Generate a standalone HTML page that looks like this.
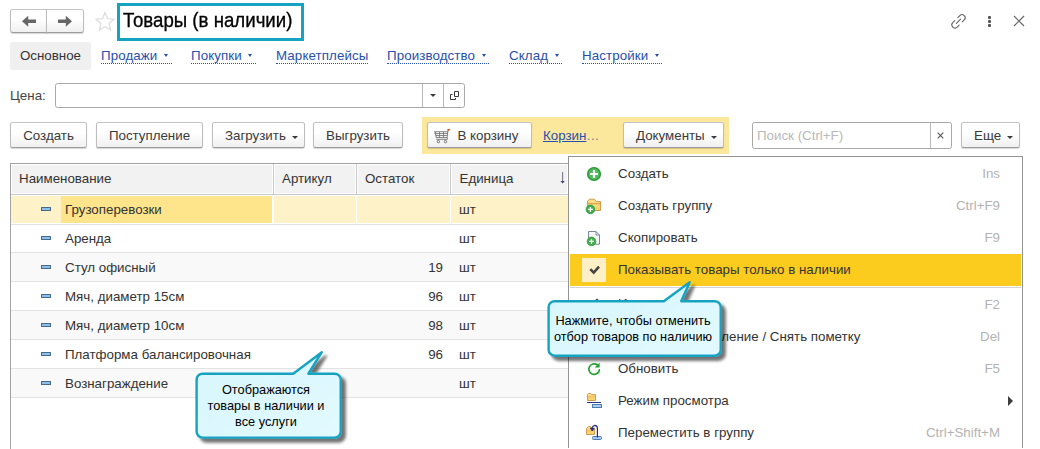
<!DOCTYPE html>
<html><head><meta charset="utf-8">
<style>
*{box-sizing:border-box;margin:0;padding:0}
html,body{width:1040px;height:449px;overflow:hidden;background:#fff}
body{font-family:"Liberation Sans",sans-serif;font-size:13.33px;color:#333;position:relative}
.abs{position:absolute}
.btn{position:absolute;height:26px;border:1px solid #bdbdbd;border-top-color:#c4c4c4;border-bottom-color:#9c9c9c;border-radius:2.5px;background:linear-gradient(#fff 40%,#f0f0f0);box-shadow:0 1px 1px rgba(0,0,0,.16);font-size:13.33px;line-height:25px;text-align:center;color:#3a3a3a;white-space:nowrap}
.car{display:inline-block;width:0;height:0;border-left:3.25px solid transparent;border-right:3.25px solid transparent;border-top:3.5px solid #3a3a3a;vertical-align:middle;margin-left:6.2px;position:relative;top:1.5px}
.tab{position:absolute;top:48px;letter-spacing:0.1px;font-size:13.33px;line-height:15px;color:#2850ae;white-space:nowrap;border-bottom:1px dotted #2850ae;padding-bottom:0px}
.tcar{display:inline-block;width:0;height:0;border-left:2.6px solid transparent;border-right:2.6px solid transparent;border-top:3.2px solid #2650b0;vertical-align:middle;margin-left:6.6px;margin-right:3.6px;position:relative;top:-1px}
.hdr{position:absolute;top:164px;height:30px;background:#f2f2f2;border:1px solid #fff;font-size:13.33px;line-height:28px;color:#333;white-space:nowrap}
.row{position:absolute;left:11px;width:557px;height:29px;font-size:13.33px;line-height:28px;color:#333}
.row.alt{}
.ln{position:absolute;left:11px;width:557px;height:1px;background:#e3e3e3}
.altbg{position:absolute;left:11px;width:557px;background:#f9f9f9}
.row span{position:absolute;top:0}
.dash{position:absolute;left:30px;top:11px;width:10px;height:4px;background:#8cc0e8;border:1px solid #46698b;border-radius:0.5px}
.mi{position:absolute;left:570px;width:451px;height:32px;font-size:13.33px;line-height:32px;color:#333;white-space:nowrap}
.mi .t{position:absolute;left:48px}
.mi .k{position:absolute;right:21px;color:#b3b3b3}
.ct{font-size:12.75px;line-height:16px;color:#000;text-align:center;white-space:nowrap}
.ct span{display:inline}
</style></head><body>

<!-- nav buttons -->
<div class="btn" style="left:10px;top:9px;width:37px;height:24px;border-radius:3px 0 0 3px"></div>
<div class="btn" style="left:46px;top:9px;width:38px;height:24px;border-radius:0 3px 3px 0"></div>
<svg class="abs" style="left:10px;top:9px" width="74" height="25" viewBox="0 0 74 25">
<path d="M12 12.3 L18.2 6.8 L18.2 10.6 L26 10.6 L26 14 L18.2 14 L18.2 17.8 Z" fill="#666"/>
<path d="M62 12.3 L55.8 6.8 L55.8 10.6 L48 10.6 L48 14 L55.8 14 L55.8 17.8 Z" fill="#666"/>
</svg>
<!-- star -->
<svg class="abs" style="left:95px;top:11px" width="20" height="20" viewBox="0 0 20 20"><path d="M10 1.5 L12.5 7.6 L19 8.2 L14 12.5 L15.6 19 L10 15.5 L4.4 19 L6 12.5 L1 8.2 L7.5 7.6 Z" fill="#fff" stroke="#dedede" stroke-width="1.3"/></svg>
<!-- title -->
<div class="abs" style="left:117px;top:3px;width:187px;height:38px;border:3px solid #14a3c2"></div>
<div class="abs" id="title" style="left:123px;top:9px;font-size:18.67px;line-height:24px;color:#000;white-space:nowrap;transform:scaleY(1.06);transform-origin:0 18.3px;-webkit-text-stroke:0.3px #000">Товары (в наличии)</div>

<!-- top right icons -->
<svg class="abs" style="left:945px;top:8px" width="28" height="28" viewBox="945 8 28 28" fill="none" stroke="#666" stroke-width="1.1" stroke-linecap="round"><g transform="translate(958.5 21.3) rotate(-45)"><path d="M-2.2 -3.1 H-5 A3.1 3.1 0 0 0 -5 3.1 H-2.2"/><path d="M2.2 -3.1 H5 A3.1 3.1 0 0 1 5 3.1 H2.2"/><path d="M-3 0 H3"/></g></svg>
<div class="abs" style="left:987.5px;top:15.5px;width:3px;height:3px;background:#555;border-radius:35%;box-shadow:0 4px 0 #555,0 8px 0 #555"></div>
<svg class="abs" style="left:1013px;top:15px" width="12" height="12" viewBox="0 0 12 12" stroke="#666" stroke-width="1.2"><path d="M1 1 L11 11 M11 1 L1 11"/></svg>

<!-- tabs -->
<div class="abs" style="left:10px;top:42px;width:81px;height:28px;background:#f0f0f0;border-radius:3px;font-size:13.33px;line-height:28px;text-align:center;color:#333">Основное</div>
<div class="tab" style="left:101px">Продажи<span class="tcar"></span></div>
<div class="tab" style="left:191px">Покупки<span class="tcar"></span></div>
<div class="tab" style="left:276px">Маркетплейсы</div>
<div class="tab" style="left:387px">Производство<span class="tcar"></span></div>
<div class="tab" style="left:509px">Склад<span class="tcar"></span></div>
<div class="tab" style="left:582px">Настройки<span class="tcar"></span></div>

<!-- Цена field -->
<div class="abs" style="left:10px;top:88px;font-size:13.33px;line-height:16px;color:#444">Цена:</div>
<div class="abs" style="left:55px;top:83px;width:410px;height:25px;border:1px solid #a8a8a8;border-radius:2.5px;background:#fff"></div>
<div class="abs" style="left:422px;top:84px;width:1px;height:23px;background:#b8b8b8"></div>
<div class="abs" style="left:443px;top:84px;width:1px;height:23px;background:#b8b8b8"></div>
<div class="abs" style="left:429.5px;top:94px;width:0;height:0;border-left:3px solid transparent;border-right:3px solid transparent;border-top:3.2px solid #3a3a3a"></div>
<svg class="abs" style="left:450px;top:91px" width="10" height="10" viewBox="0 0 10 10" fill="none" stroke="#3a3a3a" stroke-width="1"><path d="M4.5 0.5 H8.5 V5.5 H4.5 Z"/><path d="M2.6 3.5 H0.5 V8.5 H5.5 V7"/></svg>

<!-- toolbar -->
<div class="btn" style="left:10px;top:122px;width:77px">Создать</div>
<div class="btn" style="left:96px;top:122px;width:107px">Поступление</div>
<div class="btn" style="left:212px;top:122px;width:93px;text-align:left;padding-left:12px">Загрузить<span class="car"></span></div>
<div class="btn" style="left:313px;top:122px;width:90px">Выгрузить</div>
<div class="abs" style="left:422px;top:117px;width:307px;height:37px;background:#fbe89c"></div>
<div class="btn" style="left:427px;top:122px;width:105px;text-align:left;padding-left:29.5px">В корзину</div>
<div class="abs" style="left:543px;top:128px;font-size:13.33px;line-height:16px;color:#2850ae;white-space:nowrap"><span style="text-decoration:underline">Корзин</span><span style="color:#6f7f90;margin-left:0.5px;letter-spacing:0.4px">...</span></div>
<div class="btn" style="left:623px;top:122px;width:101px;text-align:left;padding-left:12px">Документы<span class="car"></span></div>
<div class="abs" style="left:752px;top:122px;width:200px;height:27px;border:1px solid #a8a8a8;border-radius:2.5px;background:#fff"></div>
<div class="abs" style="left:930px;top:123px;width:1px;height:25px;background:#b8b8b8"></div>
<div class="abs" style="left:757px;top:128px;font-size:13.33px;line-height:16px;color:#b9b9b9;white-space:nowrap">Поиск (Ctrl+F)</div>
<svg class="abs" style="left:937px;top:132px" width="7" height="7" viewBox="0 0 7 7"><path d="M0.7 0.7 L6.3 6.3 M6.3 0.7 L0.7 6.3" stroke="#555" stroke-width="1.1"/></svg>
<div class="btn" style="left:961px;top:122px;width:59px;text-align:left;padding-left:12px">Еще<span class="car"></span></div>

<!-- table -->
<div class="abs" style="left:10px;top:163px;width:560px;height:290px;border:1px solid #a3a3a3;border-right:none;border-bottom:none;background:#fff"></div>
<div class="abs" style="left:11px;top:194px;width:557px;height:1px;background:#c9c9c9"></div>
<div class="hdr" style="left:11px;width:262px;padding-left:7px">Наименование</div>
<div class="hdr" style="left:274px;width:82px;padding-left:7px">Артикул</div>
<div class="hdr" style="left:357px;width:93px;padding-left:7px">Остаток</div>
<div class="hdr" style="left:451px;width:117px;padding-left:7.5px">Единица</div>
<div class="abs" style="left:273px;top:164px;width:1px;height:30px;background:#c9c9c9"></div>
<div class="abs" style="left:356px;top:164px;width:1px;height:30px;background:#c9c9c9"></div>
<div class="abs" style="left:450px;top:164px;width:1px;height:30px;background:#c9c9c9"></div>
<svg class="abs" style="left:558px;top:170px" width="10" height="16" viewBox="0 0 10 16"><path d="M4.6 2 V12" fill="none" stroke="#6a6070" stroke-width="0.9"/><path d="M2.4 10.9 H6.8 L4.6 13.6 Z" fill="#3d4a6a"/></svg>

<div class="altbg" style="top:253px;height:28px"></div><div class="altbg" style="top:311px;height:28px"></div><div class="altbg" style="top:369px;height:28px"></div>
<div class="ln" style="top:224px"></div><div class="ln" style="top:252px"></div><div class="ln" style="top:281px"></div><div class="ln" style="top:310px"></div><div class="ln" style="top:339px"></div><div class="ln" style="top:368px"></div><div class="ln" style="top:397px"></div>
<div class="row" style="top:196px"><div class="abs" style="left:0;top:0;width:557px;height:27px;background:#fef2c8"></div><div class="abs" style="left:50px;top:0;width:211px;height:27px;background:#fee58c"></div><div class="abs" style="left:261px;top:0;width:2px;height:27px;background:#fff"></div><div class="abs" style="left:345px;top:0;width:1px;height:27px;background:#fff"></div><div class="abs" style="left:439px;top:0;width:1px;height:27px;background:#fff"></div><div class="dash"></div><span style="left:54px">Грузоперевозки</span><span style="left:448px">шт</span></div>
<div class="row" style="top:225px"><div class="dash"></div><span style="left:54px">Аренда</span><span style="left:448px">шт</span></div>
<div class="row alt" style="top:254px"><div class="dash"></div><span style="left:54px">Стул офисный</span><span style="right:125px">19</span><span style="left:448px">шт</span></div>
<div class="row" style="top:283px"><div class="dash"></div><span style="left:54px">Мяч, диаметр 15см</span><span style="right:125px">96</span><span style="left:448px">шт</span></div>
<div class="row alt" style="top:312px"><div class="dash"></div><span style="left:54px">Мяч, диаметр 10см</span><span style="right:125px">98</span><span style="left:448px">шт</span></div>
<div class="row" style="top:341px"><div class="dash"></div><span style="left:54px">Платформа балансировочная</span><span style="right:125px">96</span><span style="left:448px">шт</span></div>
<div class="row alt" style="top:370px"><div class="dash"></div><span style="left:54px">Вознаграждение</span><span style="left:448px">шт</span></div>

<!-- menu -->
<div class="abs" style="left:568px;top:156px;width:455px;height:292px;border:1px solid #949494;border-bottom:none;background:#fff"></div>
<div class="mi" style="top:158px"><span class="t">Создать</span><span class="k">Ins</span></div>
<div class="mi" style="top:190px"><span class="t">Создать группу</span><span class="k">Ctrl+F9</span></div>
<div class="mi" style="top:222px"><span class="t">Скопировать</span><span class="k">F9</span></div>
<div class="mi" style="top:254px;background:#fbcb1e"><div class="abs" style="left:12px;top:4px;width:24px;height:24px;background:#fef0c6"></div><span class="t">Показывать товары только в наличии</span></div>
<div class="abs" style="left:570px;top:287px;width:451px;height:1px;background:#d4d4d4"></div>
<div class="mi" style="top:289px"><span class="t" style="top:-1px">Изменить</span><span class="k">F2</span></div>
<div class="mi" style="top:321px"><span class="t">Пометить на удаление / Снять пометку</span><span class="k">Del</span></div>
<div class="mi" style="top:353px"><span class="t">Обновить</span><span class="k">F5</span></div>
<div class="mi" style="top:385px"><span class="t">Режим просмотра</span></div>
<div class="mi" style="top:417px"><span class="t">Переместить в группу</span><span class="k">Ctrl+Shift+M</span></div>

<!-- menu icons -->
<svg class="abs" style="left:576px;top:160px" width="40" height="290" viewBox="576 160 40 290">
<defs>
<linearGradient id="fg" x1="0" y1="0" x2="0" y2="1"><stop offset="0" stop-color="#fbe08a"/><stop offset="1" stop-color="#f9cf6a"/></linearGradient>
</defs>
<!-- create -->
<circle cx="594" cy="174" r="6.4" fill="#4fb95c" stroke="#2c9a3a" stroke-width="1.4"/>
<path d="M590 174 H598 M594 170 V178" stroke="#fff" stroke-width="2.2"/>
<!-- create group: folder -->
<path d="M587.5 210.5 V201 L589.8 199.2 H594.2 L596.3 201.5 H600.5 V210.5 Z" fill="url(#fg)" stroke="#d39a4c" stroke-width="1"/>
<path d="M587.5 203.7 H600.5" stroke="#d39a4c" stroke-width="1"/>
<circle cx="590.4" cy="209.4" r="4.3" fill="#3fae4c" stroke="#2b9a38" stroke-width="0.8"/>
<path d="M587.9 209.4 H592.9 M590.4 206.9 V211.9" stroke="#fff" stroke-width="1.3"/>
<!-- copy: doc -->
<path d="M588.5 231.5 H596 L599.5 235 V244.2 H588.5 Z" fill="#f7f7f8" stroke="#76889a" stroke-width="1"/>
<path d="M596 231.5 V235 H599.5" fill="none" stroke="#76889a" stroke-width="1"/>
<circle cx="591.5" cy="241.4" r="4.3" fill="#3fae4c" stroke="#2b9a38" stroke-width="0.8"/>
<path d="M589 241.4 H594 M591.5 238.9 V243.9" stroke="#fff" stroke-width="1.3"/>
<!-- edit (mostly hidden) -->
<path d="M595 300.3 L597 298.6 L599 300.3 Z" fill="#2a3a6a"/>
<!-- refresh -->
<path d="M599.4 369.8 A5.3 5.3 0 1 1 597.2 364.8" fill="none" stroke="#25a031" stroke-width="1.7" stroke-linecap="round"/>
<path d="M594.6 367.4 H599.6 V362.8 Z" fill="#25a031"/>
<!-- view mode -->
<path d="M587.5 400.5 V394.5 L588.4 393.5 H590.6 L591.4 394.6 H595.5 V400.5 Z" fill="url(#fg)" stroke="#d39a4c" stroke-width="1"/>
<path d="M587.5 396.8 H595.5" stroke="#e0ad5c" stroke-width="0.8"/>
<path d="M587 402.5 H601" stroke="#2d3387" stroke-width="1"/>
<rect x="592.5" y="404.5" width="9" height="3" fill="#a9c9f7" stroke="#4c7ba8" stroke-width="1"/>
<!-- move to group -->
<path d="M586.5 434.5 V428.5 L588.4 426.5 H590.4 L591.6 428 H594.5 V434.5 Z" fill="url(#fg)" stroke="#d39a4c" stroke-width="1"/>
<path d="M586.5 430.8 H594.5" stroke="#e0ad5c" stroke-width="0.8"/>
<rect x="592.5" y="436.5" width="9" height="3" rx="1" fill="#a9c9f7" stroke="#4c7ba8" stroke-width="1"/>
<path d="M597.4 437.5 V428.5 Q597.4 425.4 594.8 425.4 Q592.8 425.6 591.6 428.6" fill="none" stroke="#232f80" stroke-width="1.2"/>
<path d="M590.2 428 L594.2 428.6 L592.2 431 Z" fill="#232f80" stroke="#232f80" stroke-width="0.8" stroke-linejoin="round"/>
<!-- check -->
<path d="M590.3 269.2 L593.7 272.6 L599 266.6" fill="none" stroke="#444" stroke-width="2.6"/>
</svg>
<!-- submenu arrow -->
<div class="abs" style="left:1008.3px;top:396px;width:0;height:0;border-top:5px solid transparent;border-bottom:5px solid transparent;border-left:5.5px solid #3c3c3c"></div>
<!-- cart icon -->
<svg class="abs" style="left:432px;top:127px" width="20" height="18" viewBox="432 127 20 18">
<path d="M434 131.2 H448.4 L447.5 138 H436 Z" fill="#7c7c7c"/>
<g fill="#f4f4f4"><rect x="435.9" y="132.1" width="3.1" height="1"/><rect x="439.9" y="132.1" width="3.1" height="1"/><rect x="443.9" y="132.1" width="3.2" height="1"/>
<rect x="436.2" y="134" width="2.8" height="1.1"/><rect x="439.9" y="134" width="3.1" height="1.1"/><rect x="443.9" y="134" width="3.1" height="1.1"/>
<rect x="436.6" y="136" width="2.4" height="1.1"/><rect x="439.9" y="136" width="3.1" height="1.1"/><rect x="443.9" y="136" width="2.9" height="1.1"/></g>
<path d="M447.3 137.8 V139.3 H436.3" fill="none" stroke="#7c7c7c" stroke-width="1"/>
<path d="M447.4 131.3 V129.1 H450.1 V130.3 H448.7 V131.3 Z" fill="#c9541c"/>
<circle cx="438.4" cy="141.6" r="1.2" fill="#fff" stroke="#6e6e6e" stroke-width="1"/>
<circle cx="445.5" cy="141.6" r="1.2" fill="#fff" stroke="#6e6e6e" stroke-width="1"/>
</svg>

<!-- callouts -->
<svg class="abs" style="left:0;top:0" width="1040" height="449" viewBox="0 0 1040 449">
<defs>
<linearGradient id="cg" x1="0" y1="0" x2="1" y2="1"><stop offset="0" stop-color="#d7f6fd"/><stop offset="0.6" stop-color="#ddf8fe"/><stop offset="1" stop-color="#e2faff"/></linearGradient>
<filter id="sh" x="-20%" y="-20%" width="150%" height="160%"><feGaussianBlur in="SourceAlpha" stdDeviation="1.8"/><feOffset dx="3.5" dy="4"/><feComponentTransfer><feFuncA type="linear" slope="0.55"/></feComponentTransfer><feMerge><feMergeNode/><feMergeNode in="SourceGraphic"/></feMerge></filter>
</defs>
<path id="c1" filter="url(#sh)" d="M202.6 373.7 H293.2 L321.8 352.2 L308.4 373.7 H334.7 a6 6 0 0 1 6 6 V431.6 a6 6 0 0 1 -6 6 H202.6 a6 6 0 0 1 -6 -6 V379.7 a6 6 0 0 1 6 -6 Z" fill="url(#cg)" stroke="#17a3c2" stroke-width="2.4" stroke-linejoin="round"/>
<path id="c2" filter="url(#sh)" d="M554.6 301.2 H663.8 L689.7 282.2 L681.2 301.2 H714.7 a6 6 0 0 1 6 6 V349.7 a6 6 0 0 1 -6 6 H554.6 a6 6 0 0 1 -6 -6 V307.2 a6 6 0 0 1 6 -6 Z" fill="url(#cg)" stroke="#17a3c2" stroke-width="2.4" stroke-linejoin="round"/>
</svg>
<div class="abs ct" id="ct1" style="left:193px;top:382px;width:146px">Отображаются<br>товары в наличии и<br>все услуги</div>
<div class="abs ct" id="ct2" style="left:546.5px;top:313px;width:173px">Нажмите, чтобы отменить<br>отбор товаров по наличию</div>

</body></html>
